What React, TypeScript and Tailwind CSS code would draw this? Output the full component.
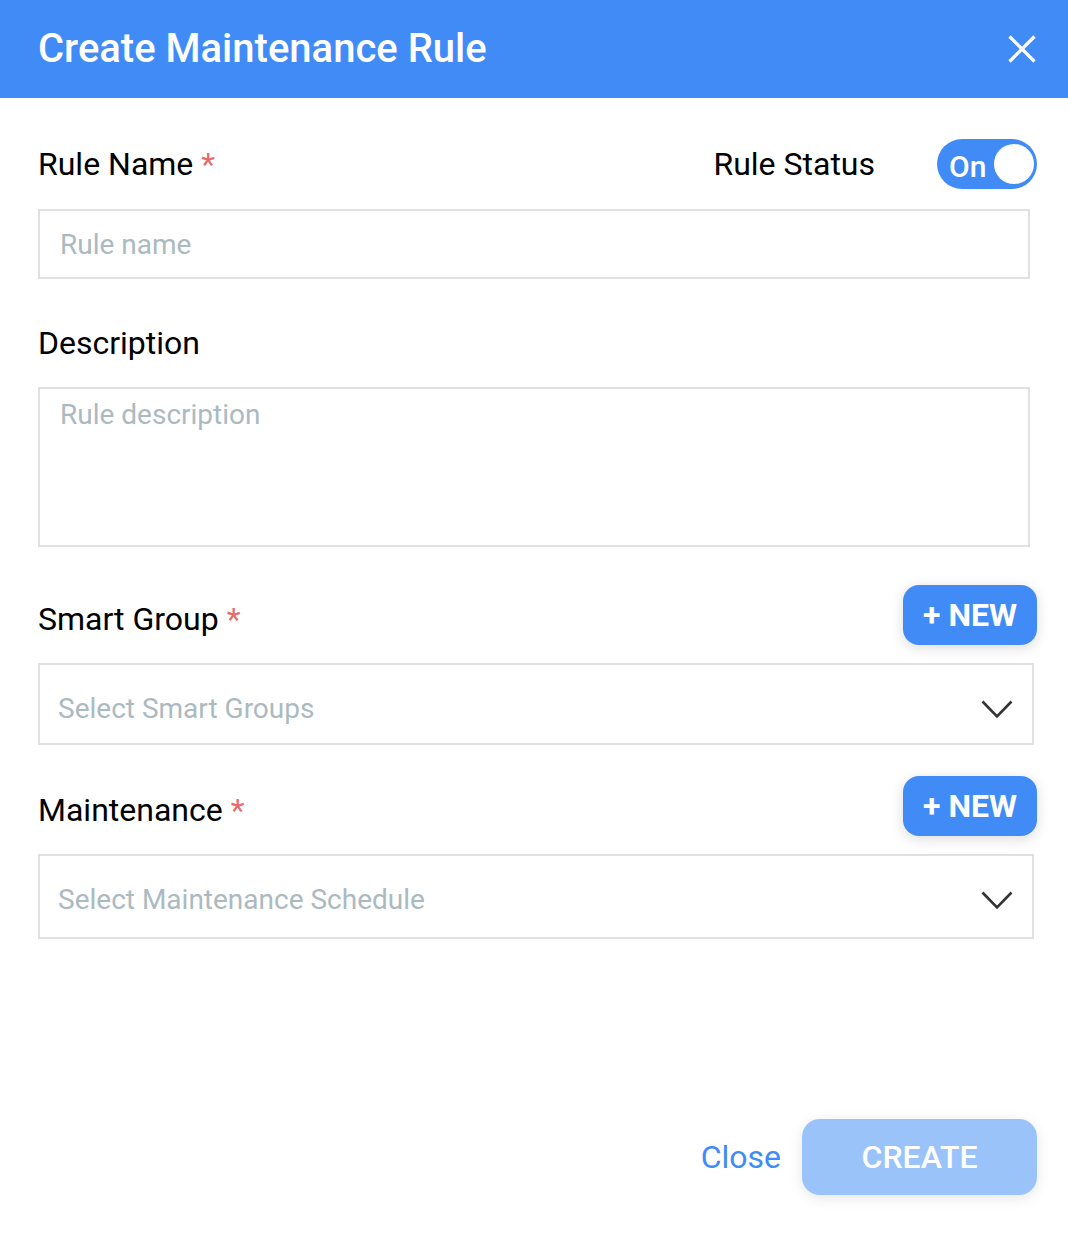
import React from "react";

function Chevron() {
  return (
    <svg width="32" height="19" viewBox="0 0 32 19" fill="none">
      <polyline points="1.5,1.5 16,16.5 30.5,1.5" stroke="#333" strokeWidth="2.6" />
    </svg>
  );
}

function NewButton() {
  return (
    <button className="h-[60px] w-[134px] rounded-[16px] bg-[#418bf7] text-white text-[32px] font-bold shadow-[0_3px_14px_rgba(0,0,0,0.14)] flex items-center justify-center">
      + NEW
    </button>
  );
}

export default function App() {
  return (
    <div
      className="w-[1068px] h-[1254px] bg-white flex flex-col"
      style={{ fontFamily: "Roboto, 'Noto Sans', sans-serif" }}
    >
      <div className="h-[98px] bg-[#418bf7] flex items-center justify-between pl-[38px] pr-[32px] shrink-0">
        <h1 className="text-white text-[40px] font-medium leading-none">Create Maintenance Rule</h1>
        <svg width="28" height="28" viewBox="0 0 28 28" fill="none">
          <line x1="1.5" y1="1.5" x2="26.5" y2="26.5" stroke="white" strokeWidth="3.2" />
          <line x1="26.5" y1="1.5" x2="1.5" y2="26.5" stroke="white" strokeWidth="3.2" />
        </svg>
      </div>

      <div className="flex flex-col pl-[38px] pr-[31px] flex-1">
        <div className="mt-[41px] h-[50px] flex items-center justify-between">
          <div className="text-[32px] text-black leading-none">
            Rule Name <span className="text-[#e86a6a]">*</span>
          </div>
          <div className="flex items-center">
            <span className="text-[32px] text-black leading-none mr-[62px]">Rule Status</span>
            <div className="w-[100px] h-[50px] rounded-full bg-[#418bf7] flex items-center justify-between pl-[12px] pr-[3px]">
              <span className="text-white text-[30px] font-medium leading-none pt-[5px]">On</span>
              <span className="w-[40px] h-[40px] rounded-full bg-white block" />
            </div>
          </div>
        </div>

        <input
          className="mt-[20px] h-[70px] w-[992px] border-2 border-[#e0e0e0] px-[20px] text-[28px] text-black placeholder:text-[#abbac0] outline-none"
          placeholder="Rule name"
        />

        <div className="mt-[44px] h-[40px] flex items-center text-[32px] text-black">Description</div>

        <textarea
          className="mt-[24px] h-[160px] w-[992px] border-2 border-[#e0e0e0] px-[20px] pt-[9px] text-[28px] leading-[34px] text-black placeholder:text-[#abbac0] outline-none resize-none"
          placeholder="Rule description"
        />

        <div className="mt-[38px] h-[60px] flex items-center justify-between">
          <div className="text-[32px] text-black leading-none pt-[8px]">
            Smart Group <span className="text-[#e86a6a]">*</span>
          </div>
          <NewButton />
        </div>

        <div className="mt-[18px] h-[82px] w-[996px] border-2 border-[#e0e0e0] flex items-center justify-between pl-[18px] pr-[19px] pt-[10px]">
          <span className="text-[28px] text-[#abbac0]">Select Smart Groups</span>
          <Chevron />
        </div>

        <div className="mt-[31px] h-[60px] flex items-center justify-between">
          <div className="text-[32px] text-black leading-none pt-[8px]">
            Maintenance <span className="text-[#e86a6a]">*</span>
          </div>
          <NewButton />
        </div>

        <div className="mt-[18px] h-[85px] w-[996px] border-2 border-[#e0e0e0] flex items-center justify-between pl-[18px] pr-[19px] pt-[7px]">
          <span className="text-[28px] text-[#abbac0]">Select Maintenance Schedule</span>
          <Chevron />
        </div>

        <div className="mt-[180px] flex items-center justify-end">
          <span className="text-[32px] text-[#418bf7] mr-[21px]">Close</span>
          <button className="w-[235px] h-[76px] rounded-[18px] bg-[#9ac3f9] text-white text-[32px] font-medium shadow-[0_3px_14px_rgba(0,0,0,0.10)]">
            CREATE
          </button>
        </div>
      </div>
    </div>
  );
}
